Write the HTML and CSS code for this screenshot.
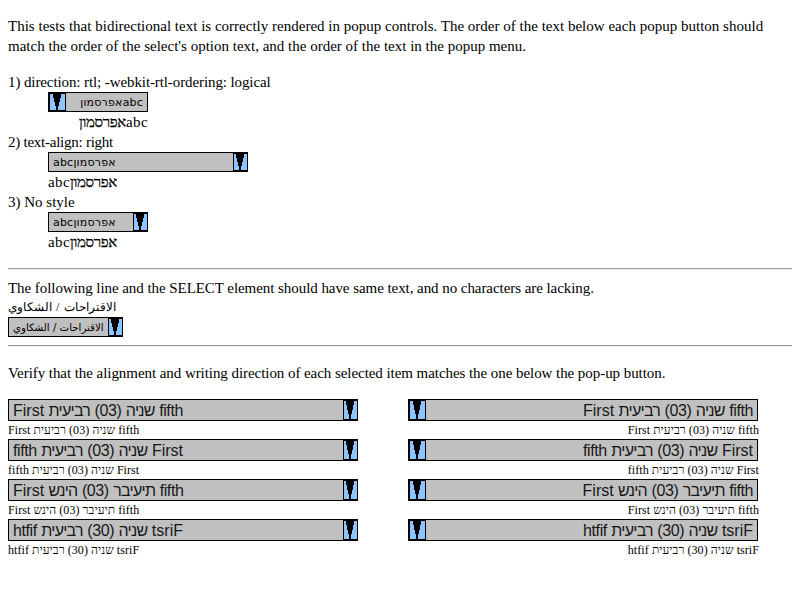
FILE: index.html
```html
<!DOCTYPE html>
<html lang="en"><head><meta charset="utf-8"><title>Bidirectional popup text</title><link rel="stylesheet" href="styles.css"></head>
<body>
<p class="intro"><span class="l1">This tests that bidirectional text is correctly rendered in popup controls. The order of the text below each popup button should</span><br><span class="l2">match the order of the select's option text, and the order of the text in the popup menu.</span></p>
<dl class="cases">
<dt class="c1">1) direction: rtl; -webkit-rtl-ordering: logical</dt>
<dd><div class="popup small w100 rtl"><span class="label" dir="rtl">abcאפרסמון</span><span class="arrow"><svg viewBox="0 0 13 18" preserveAspectRatio="none"><path d="M2 0h8v4h-1v5h-1v4h-1v5h-2v-5h-1V9h-1V4h-1z"/></svg></span></div></dd>
<dd><div class="w100 line echo-case" dir="rtl">abc<span class="he">אפרסמון</span></div></dd>
<dt class="c2">2) text-align: right</dt>
<dd><div class="popup small w200"><span class="label">abcאפרסמון</span><span class="arrow"><svg viewBox="0 0 13 18" preserveAspectRatio="none"><path d="M2 0h8v4h-1v5h-1v4h-1v5h-2v-5h-1V9h-1V4h-1z"/></svg></span></div></dd>
<dd class="echo-case">abc<span class="he">אפרסמון</span></dd>
<dt>3) No style</dt>
<dd><div class="popup small w100"><span class="label">abcאפרסמון</span><span class="arrow"><svg viewBox="0 0 13 18" preserveAspectRatio="none"><path d="M2 0h8v4h-1v5h-1v4h-1v5h-2v-5h-1V9h-1V4h-1z"/></svg></span></div></dd>
<dd class="echo-case">abc<span class="he">אפרסמון</span></dd>
</dl>
<hr>
<div class="arabic-case">
<div class="line"><span class="l3">The following line and the SELECT element should have same text, and no characters are lacking.</span></div>
<div class="ar">الاقتراحات / الشكاوي</div>
<div class="popup small w115"><span class="label ar-label">الاقتراحات / الشكاوي</span><span class="arrow"><svg viewBox="0 0 13 18" preserveAspectRatio="none"><path d="M2 0h8v4h-1v5h-1v4h-1v5h-2v-5h-1V9h-1V4h-1z"/></svg></span></div>
</div>
<hr>
<p class="verify"><span class="l4">Verify that the alignment and writing direction of each selected item matches the one below the pop-up button.</span></p>
<div class="columns" id="columns"></div>
<script src="script.js"></script>
</body></html>
```
FILE: styles.css
```css
body { margin: 0 8px; font: 15px/20px "Liberation Serif", serif; color: #000; background: #fff; }
p, dl, dd, hr { margin: 0; }
.intro { padding-top: 16px; white-space: nowrap; }
.l1 { letter-spacing: 0.008px; }
.l3, .l4 { letter-spacing: -0.06px; }
.c1 { letter-spacing: -0.1px; }
.c2 { letter-spacing: -0.25px; }
.cases { margin-top: 16px; }
dt, dd, .line { height: 20px; white-space: nowrap; }
dd { padding-left: 40px; }
.echo-case { letter-spacing: 0.4px; }
.he { letter-spacing: -0.35px; -webkit-text-stroke: 0.25px #000; }
hr { border: 0; height: 2px; background: linear-gradient(#9a9a9a 50%, #eee 50%); margin-top: 16px; }
.arabic-case { padding-top: 8px; }
.ar { height: 19px; line-height: 18px; font-size: 12.4px; word-spacing: 1px; white-space: nowrap; }
.arabic-case + hr { margin-top: 8px; }
.verify { margin-top: 16px; white-space: nowrap; }
.popup { display: flex; box-sizing: border-box; border: 1px solid #000; background: #c0c0c0; height: 20px; overflow: hidden; }
.label { flex: 1; padding: 0 4px; white-space: nowrap; }
.small { font: 11px/19px "DejaVu Sans", sans-serif; letter-spacing: 0.2px; }
.ar-label { font-size: 10.2px; letter-spacing: 0; }
.w100 { width: 100px; }
.w200 { width: 200px; }
.w115 { width: 115px; }
.arrow { flex: none; box-sizing: border-box; width: 14px; border: 1px solid #000; border-right: 0; background: #8cc4ff; }
.arrow svg { display: block; width: 13px; height: 100%; shape-rendering: crispEdges; }
.rtl { flex-direction: row-reverse; }
.rtl .arrow { width: 17px; border-right: 1px solid #000; padding-left: 1px; }
.columns { display: grid; grid-template-columns: 351px 351px; column-gap: 49px; padding-top: 16px; }
.large { width: 350px; height: 22px; font: 16px/21px "Liberation Sans", sans-serif; color: #181818; }
.large .hebrew { letter-spacing: -0.75px; }
.large .number, .large .fifth { letter-spacing: -0.4px; }
.entry { height: 40px; }
.echo { font-size: 12px; line-height: 18px; height: 18px; letter-spacing: 0.07px; white-space: nowrap; }
.right .label, .right .echo { text-align: right; }
```
FILE: script.js
```js
const text = 'First <span class="hebrew">שניה</span> <span class="number">(03)</span> <span class="hebrew">רביעית</span> <span class="fifth">fifth</span>';
const modes = [["span", "ltr"], ["span", "rtl"], ["bdo", "ltr"], ["bdo", "rtl"]];
const arrow = '<span class="arrow"><svg viewBox="0 0 13 18" preserveAspectRatio="none"><path d="M2 0h8v4h-1v5h-1v4h-1v5h-2v-5h-1V9h-1V4h-1z"/></svg></span>';
document.getElementById("columns").innerHTML = ["left", "right"].map(side =>
  `<div class="${side}">` + modes.map(([tag, dir]) => {
    const item = `<${tag} dir="${dir}">${text}</${tag}>`;
    return `<div class="entry"><div class="popup large ${side === "right" ? "rtl" : ""}"><span class="label">${item}</span>${arrow}</div><div class="echo">${item}</div></div>`;
  }).join("") + "</div>").join("");
```
